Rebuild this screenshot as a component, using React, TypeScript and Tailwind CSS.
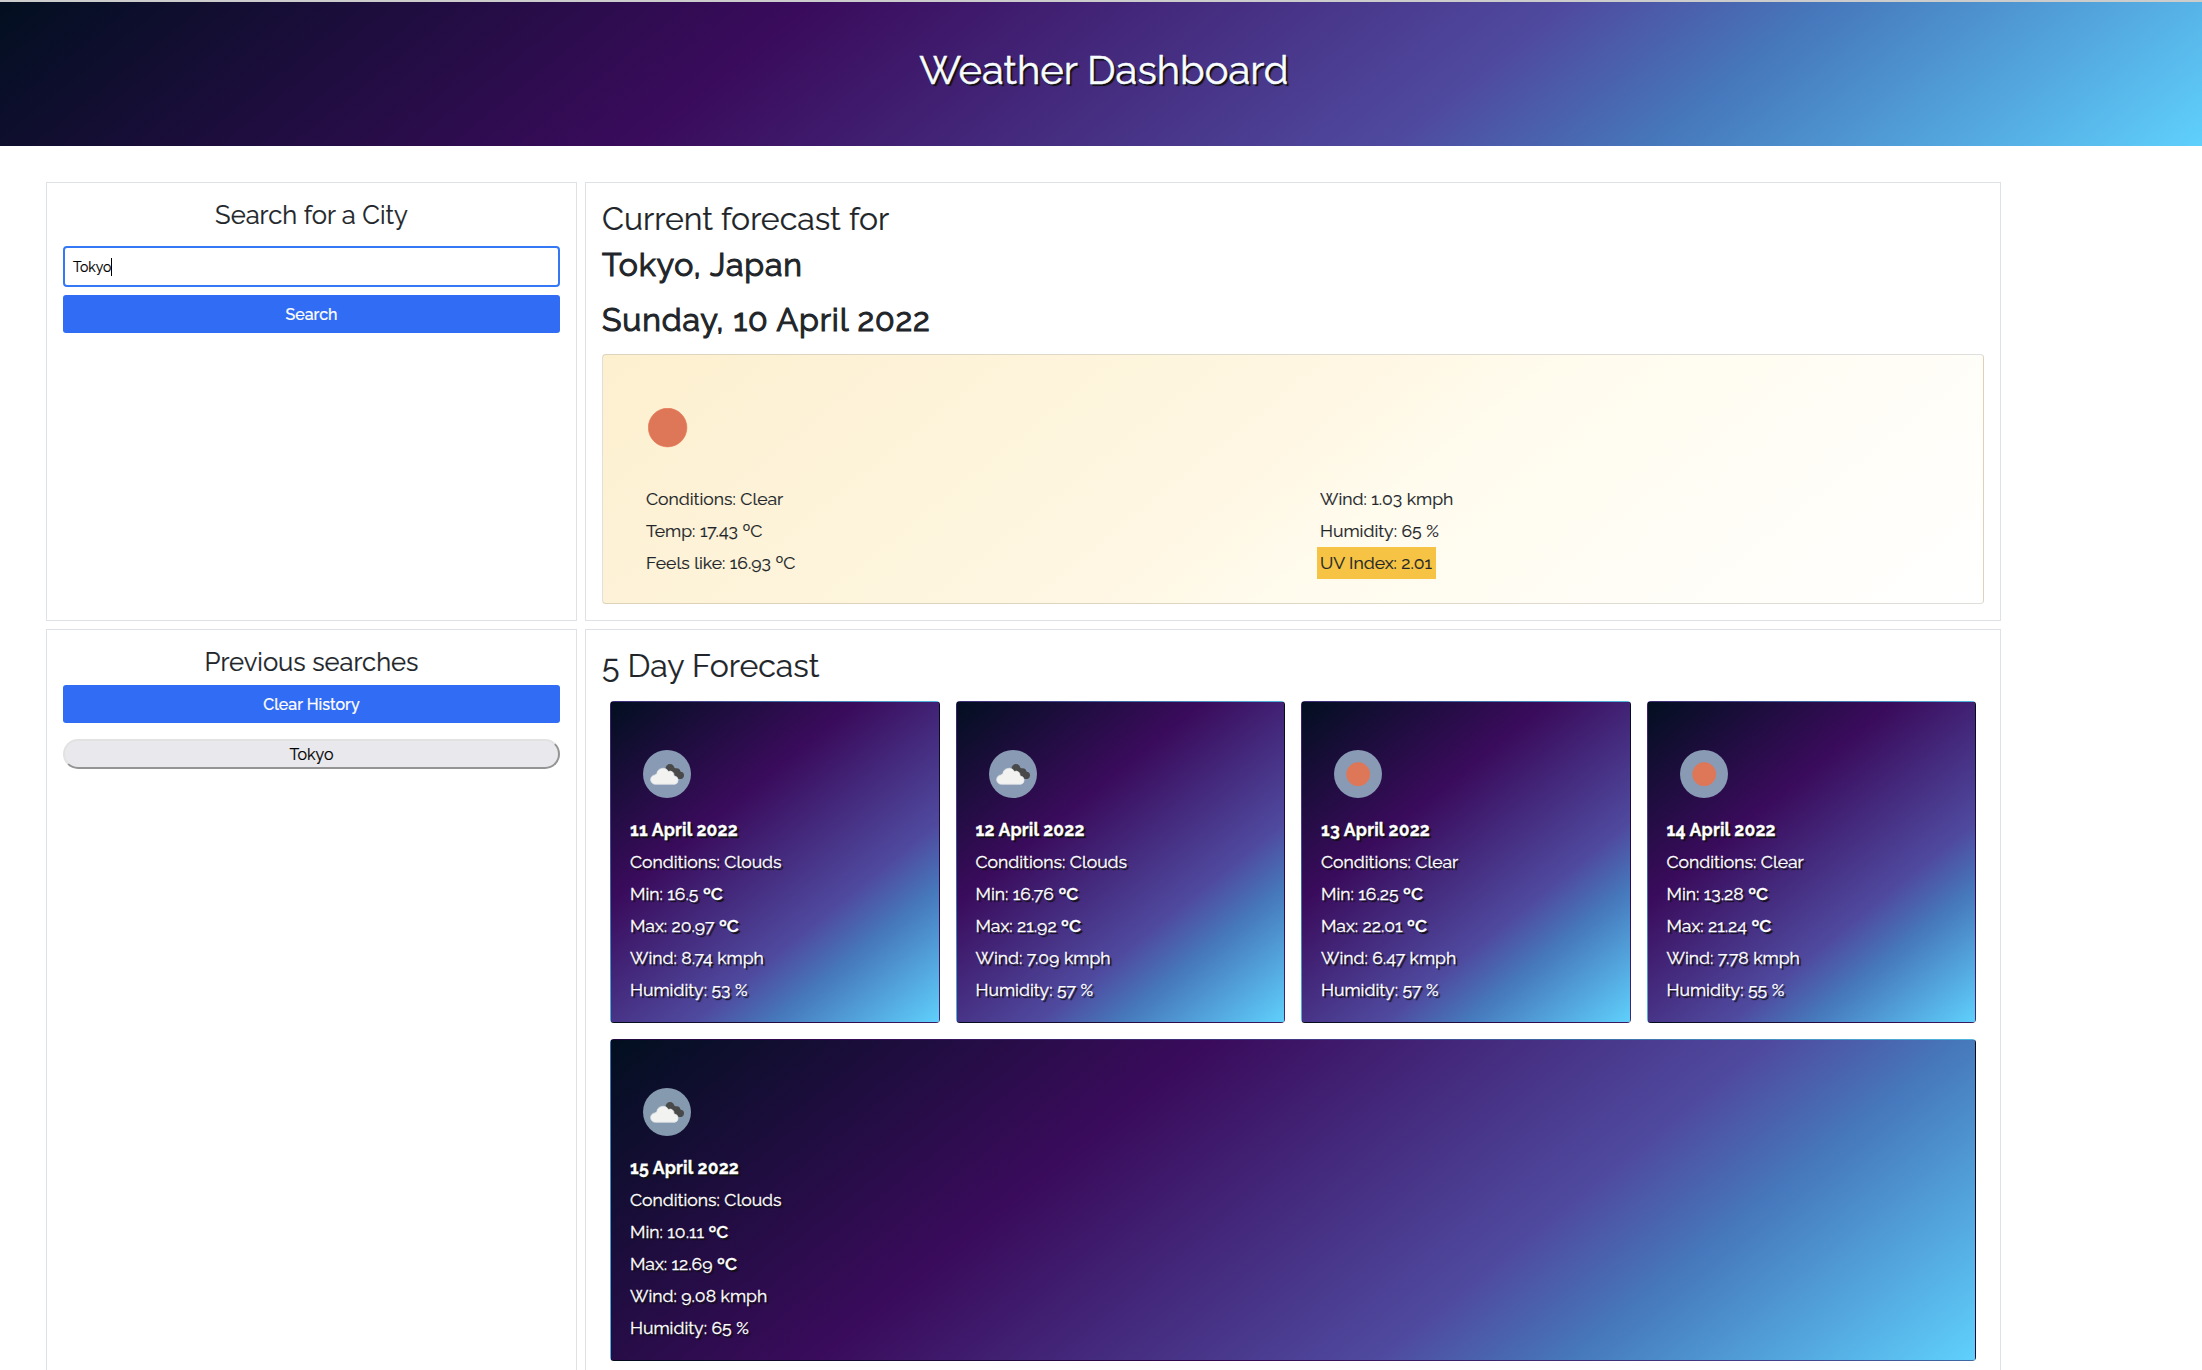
import React from "react";

type Kind = "Clouds" | "Clear";

interface Day {
  date: string;
  conditions: Kind;
  min: string;
  max: string;
  wind: string;
  humidity: string;
}

const days: Day[] = [
  { date: "11 April 2022", conditions: "Clouds", min: "16.5", max: "20.97", wind: "8.74", humidity: "53" },
  { date: "12 April 2022", conditions: "Clouds", min: "16.76", max: "21.92", wind: "7.09", humidity: "57" },
  { date: "13 April 2022", conditions: "Clear", min: "16.25", max: "22.01", wind: "6.47", humidity: "57" },
  { date: "14 April 2022", conditions: "Clear", min: "13.28", max: "21.24", wind: "7.78", humidity: "55" },
  { date: "15 April 2022", conditions: "Clouds", min: "10.11", max: "12.69", wind: "9.08", humidity: "65" },
];

const night =
  "bg-[linear-gradient(141deg,#020f20_0%,#3a0b5c_34%,#4f4a9f_66%,#4678bc_77%,#5fd0fc_100%)]";

function WeatherIcon({ kind }: { kind: Kind }) {
  if (kind === "Clear") {
    return (
      <svg viewBox="0 0 48 48" className="size-12">
        <circle cx="24.2" cy="24.2" r="11.6" fill="#dd7757" stroke="#e87452" strokeWidth="0.6" />
      </svg>
    );
  }
  return (
    <svg viewBox="0 0 48 48" className="size-12">
      <g fill="#494949">
        <circle cx="27" cy="18.6" r="4.5" />
        <circle cx="33.6" cy="22" r="3.8" />
        <circle cx="37.4" cy="25.3" r="3.6" />
        <path d="M24 21 L30 17 L38 22 L39 28.8 L34 28.6 Z" />
      </g>
      <path
        d="M12.6 34.3a4.7 4.7 0 0 1-.5-9.4 2 2 0 0 1 1.7-.8 6.2 6.2 0 0 1 11.6-2.6 3.9 3.9 0 0 1 5.6 3.8l.5.6a4.3 4.3 0 0 1 .4 8.4z"
        fill="#f2f2f1"
        stroke="#e4e6ea"
        strokeWidth="0.7"
      />
    </svg>
  );
}

function DayCard({ day, wide }: { day: Day; wide: boolean }) {
  return (
    <article
      className={`${night} flex h-[322px] flex-col rounded border border-black/[0.125] pl-[19px] text-[17.6px] leading-8 text-white [-webkit-text-stroke:0.3px] [text-shadow:2px_2px_1px_#101010] ${wide ? "col-span-4" : ""}`}
    >
      <div
        className={`mt-12 ml-[13px] size-12 shrink-0 rounded-full ${wide ? "bg-[#859aae]" : "bg-[#899ab4]"}`}
      >
        <WeatherIcon kind={day.conditions} />
      </div>
      <p className="mt-4 font-bold tracking-[0.2px]">{day.date}</p>
      <p>Conditions: {day.conditions}</p>
      <p>
        Min: {day.min} <span className="font-semibold">ºC</span>
      </p>
      <p>
        Max: {day.max} <span className="font-semibold">ºC</span>
      </p>
      <p>Wind: {day.wind} kmph</p>
      <p>Humidity: {day.humidity} %</p>
    </article>
  );
}

export default function App() {
  return (
    <div className="h-[1370px] overflow-hidden bg-white font-[Raleway,Lato,sans-serif] text-[#212529] [-webkit-text-stroke:0.2px]">
      <header className={`${night} box-content h-36 border-t-2 border-[#cccccc] bg-origin-padding`}>
        <h1 className="pt-11 pl-[6px] text-center text-[40px] leading-[48px] text-[#f8fdff] [-webkit-text-stroke:0.5px] [text-shadow:2px_2px_1px_#101010]">
          Weather Dashboard
        </h1>
      </header>

      <main className="mt-9 ml-[46px] grid w-[1955px] grid-cols-[531px_1416px] grid-rows-[439px_760px] gap-2">
        <section className="border border-[#dee2e6] p-4">
          <h2 className="text-center text-[25.6px] leading-8">Search for a City</h2>
          <div className="mt-[15px] flex h-[41px] items-center rounded border-2 border-[#3478f6] pl-2 text-sm text-black">
            Tokyo
            <span className="h-[18px] w-px bg-black" />
          </div>
          <button className="mt-2 block h-[38px] w-full rounded-[3px] bg-[#316cf4] pt-[2px] text-base font-medium text-white">
            Search
          </button>
        </section>

        <section className="border border-[#dee2e6] p-4">
          <h2 className="text-[32px] leading-10">Current forecast for</h2>
          <h2 className="mt-1.5 text-[32px] leading-10 tracking-[0.9px] [-webkit-text-stroke:1.1px]">Tokyo, Japan</h2>
          <h2 className="mt-[15px] text-[32px] leading-10 tracking-[0.9px] [-webkit-text-stroke:1.1px]">
            Sunday, 10 April 2022
          </h2>
          <article className="mt-3.5 h-[250px] rounded border border-black/[0.125] bg-[linear-gradient(141deg,#fdf0cf_0%,#fdf2d6_15%,#fef5de_35%,#fff7e4_47%,#fffbed_57%,#ffffff_100%)] pt-[53px] pl-[43px]">
            <svg viewBox="0 0 40 40" className="ml-[2px] size-10">
              <circle cx="19.6" cy="19.6" r="19.3" fill="#dd7757" stroke="#e67352" strokeWidth="0.6" />
            </svg>
            <div className="mt-[35px] grid grid-cols-[674px_1fr] text-[17.6px] leading-8">
              <div>
                <p>Conditions: Clear</p>
                <p>Temp: 17.43 ºC</p>
                <p>Feels like: 16.93 ºC</p>
              </div>
              <div>
                <p>Wind: 1.03 kmph</p>
                <p>Humidity: 65 %</p>
                <p className="-ml-[3px] w-fit bg-[#f6c344] pr-1 pl-[3px]">UV Index: 2.01</p>
              </div>
            </div>
          </article>
        </section>

        <section className="border border-[#dee2e6] p-4">
          <h2 className="text-center text-[25.6px] leading-8">Previous searches</h2>
          <button className="mt-[7px] block h-[38px] w-full rounded-[3px] bg-[#316cf4] pt-[2px] text-base font-medium text-white">
            Clear History
          </button>
          <button className="mt-4 block h-[30px] w-full rounded-[15px] border-2 border-t-[#e2e2e2] border-r-[#949494] border-b-[#949494] border-l-[#e2e2e2] bg-[#e9e9ed] pt-[2px] text-base leading-6 text-black">
            Tokyo
          </button>
        </section>

        <section className="border border-[#dee2e6] p-4">
          <h2 className="text-[32px] leading-10">5 Day Forecast</h2>
          <div className="mt-[15px] ml-2 grid w-[1366px] grid-cols-4 gap-4">
            {days.map((day, i) => (
              <DayCard key={day.date} day={day} wide={i === 4} />
            ))}
          </div>
        </section>
      </main>
    </div>
  );
}
